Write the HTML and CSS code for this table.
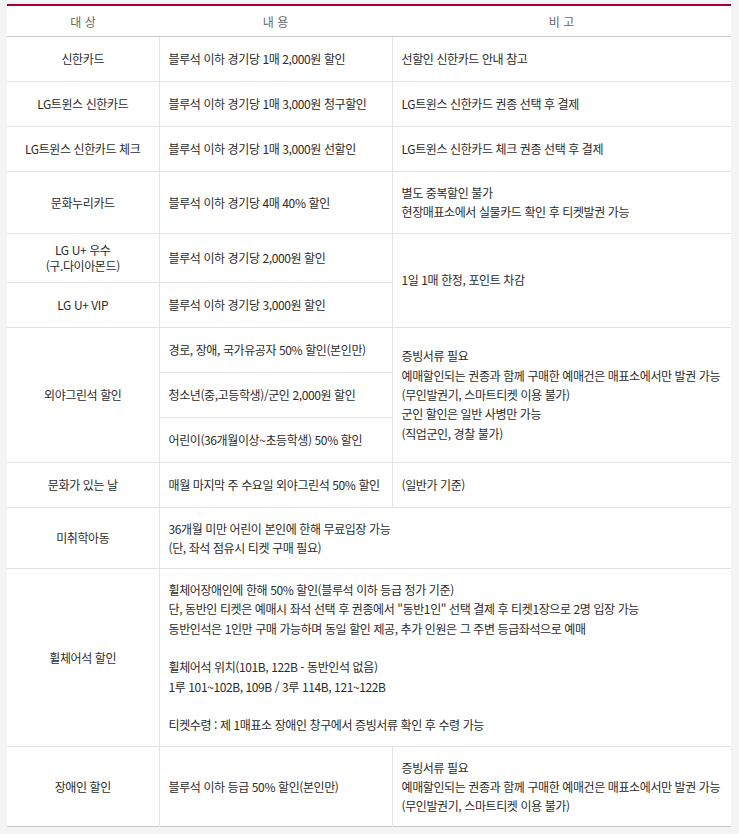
FILE: index.html
```html
<!DOCTYPE html>
<html lang="ko">
<head>
<meta charset="utf-8">
<title>할인 안내</title>
<link rel="stylesheet" href="styles.css">
</head>
<body>
<div class="wrap">
<table class="benefit">
<colgroup>
<col class="c1">
<col class="c2">
<col class="c3">
</colgroup>
<thead>
<tr><th>대 상</th><th>내 용</th><th>비 고</th></tr>
</thead>
<tbody>
<tr><td class="name">신한카드</td><td>블루석 이하 경기당 1매 2,000원 할인</td><td>선할인 신한카드 안내 참고</td></tr>
<tr><td class="name">LG트윈스 신한카드</td><td>블루석 이하 경기당 1매 3,000원 청구할인</td><td>LG트윈스 신한카드 권종 선택 후 결제</td></tr>
<tr><td class="name">LG트윈스 신한카드 체크</td><td>블루석 이하 경기당 1매 3,000원 선할인</td><td>LG트윈스 신한카드 체크 권종 선택 후 결제</td></tr>
<tr><td class="name">문화누리카드</td><td>블루석 이하 경기당 4매 40% 할인</td><td class="multi">별도 중복할인 불가<br>현장매표소에서 실물카드 확인 후 티켓발권 가능</td></tr>
<tr><td class="name tight">LG U+ 우수<br>(구.다이아몬드)</td><td>블루석 이하 경기당 2,000원 할인</td><td rowspan="2">1일 1매 한정, 포인트 차감</td></tr>
<tr><td class="name">LG U+ VIP</td><td>블루석 이하 경기당 3,000원 할인</td></tr>
<tr><td class="name" rowspan="3">외야그린석 할인</td><td>경로, 장애, 국가유공자 50% 할인(본인만)</td><td rowspan="3" class="multi">증빙서류 필요<br>예매할인되는 권종과 함께 구매한 예매건은 매표소에서만 발권 가능<br>(무인발권기, 스마트티켓 이용 불가)<br>군인 할인은 일반 사병만 가능<br>(직업군인, 경찰 불가)</td></tr>
<tr><td>청소년(중,고등학생)/군인 2,000원 할인</td></tr>
<tr><td>어린이(36개월이상~초등학생) 50% 할인</td></tr>
<tr><td class="name">문화가 있는 날</td><td>매월 마지막 주 수요일 외야그린석 50% 할인</td><td>(일반가 기준)</td></tr>
<tr><td class="name">미취학아동</td><td colspan="2" class="multi">36개월 미만 어린이 본인에 한해 무료입장 가능<br>(단, 좌석 점유시 티켓 구매 필요)</td></tr>
<tr><td class="name">휠체어석 할인</td><td colspan="2" class="multi">휠체어장애인에 한해 50% 할인(블루석 이하 등급 정가 기준)<br>단, 동반인 티켓은 예매시 좌석 선택 후 권종에서 "동반1인" 선택 결제 후 티켓1장으로 2명 입장 가능<br>동반인석은 1인만 구매 가능하며 동일 할인 제공, 추가 인원은 그 주변 등급좌석으로 예매<br><br>휠체어석 위치(101B, 122B - 동반인석 없음)<br>1루 101~102B, 109B / 3루 114B, 121~122B<br><br>티켓수령 : 제 1매표소 장애인 창구에서 증빙서류 확인 후 수령 가능</td></tr>
<tr><td class="name">장애인 할인</td><td>블루석 이하 등급 50% 할인(본인만)</td><td class="multi">증빙서류 필요<br>예매할인되는 권종과 함께 구매한 예매건은 매표소에서만 발권 가능<br>(무인발권기, 스마트티켓 이용 불가)</td></tr>
</tbody>
</table>
</div>
</body>
</html>
```

FILE: styles.css
```css
html, body {
  margin: 0;
  padding: 0;
  background: #f4f4f4;
}
body {
  font-family: "Noto Sans CJK KR", "Noto Sans", sans-serif;
  font-size: 12px;
  color: #2b2b2b;
  letter-spacing: -0.4px;
}
.wrap {
  padding: 4px 8px 0 7px;
}
.benefit {
  width: 724px;
  border-collapse: collapse;
  table-layout: fixed;
  background: #fff;
  border-top: 2px solid #a50034;
  border-bottom: 1px solid #c8c8c8;
}
.c1 { width: 152px; }
.c2 { width: 233px; }
.c3 { width: 339px; }
.benefit th {
  font-weight: normal;
  color: #666;
  height: 30px;
  padding: 0;
  line-height: 19px;
  letter-spacing: 0;
  text-align: center;
  border-bottom: 1px solid #c8c8c8;
}
.benefit td {
  height: 20px;
  padding: 12px 8px 12px 9px;
  line-height: 19.3px;
  vertical-align: middle;
  text-align: left;
  border-top: 1px solid #e3e3e3;
  border-left: 1px solid #e3e3e3;
}
.benefit td.name {
  text-align: center;
  border-left: none;
  padding-left: 4px;
  padding-right: 4px;
}
.benefit td.multi {
  padding-top: 11px;
  padding-bottom: 11px;
}
.benefit td.name.tight {
  line-height: 16px;
  padding-top: 8px;
  padding-bottom: 8px;
}
```
